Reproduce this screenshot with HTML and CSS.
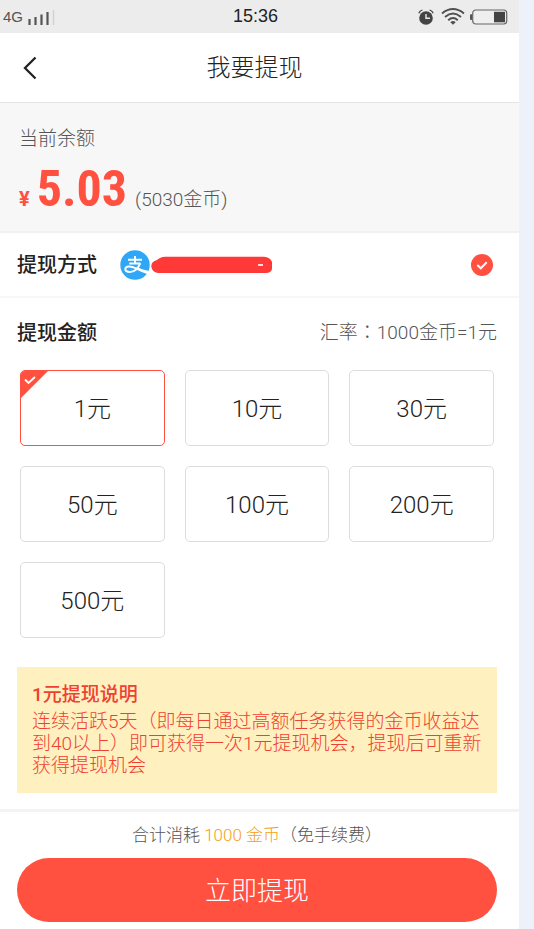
FILE: index.html
```html
<!DOCTYPE html>
<html lang="zh-CN">
<head>
<meta charset="utf-8">
<meta name="viewport" content="width=device-width, initial-scale=1">
<title>我要提现</title>
<link rel="stylesheet" href="styles.css">
</head>
<body>
<div class="screen">
  <div class="status">
    <div class="status-side">
      <span class="network">4G</span>
      <svg class="signal" width="27" height="16" viewBox="0 0 27 16" aria-hidden="true">
        <path d="M1.500 10v6M7.500 8V16M13.500 5.500v10.500M19.500 3V16" stroke="#555" stroke-width="2.200"/>
        <path d="M25.500 1v15" stroke="#d2d2d2" stroke-width="1.500"/>
      </svg>
    </div>
    <time class="clock">15:36</time>
    <div class="status-side status-right">
      <svg width="16" height="16" viewBox="0 0 16 16" aria-hidden="true">
        <circle cx="8" cy="9" r="6.800" fill="#444"/>
        <path d="M.8 4.200Q1.800 1.800 4.400 1M15.200 4.200Q14.200 1.800 11.600 1" fill="none" stroke="#444" stroke-width="1.300"/>
        <path d="M8 5v4.300h4" fill="none" stroke="#ececec" stroke-width="1.400"/>
      </svg>
      <svg width="24" height="17" viewBox="0 0 24 17" aria-hidden="true">
        <g fill="none" stroke="#505050" stroke-width="1.900">
          <path d="M1 5.500Q12-3.300 23 5.500"/>
          <path d="M4 9Q12 2.200 20 9"/>
          <path d="M7.200 12.200Q12 7.800 16.800 12.200"/>
        </g>
        <path d="M9.300 14.200Q12 12 14.700 14.200L12 16.800z" fill="#505050"/>
      </svg>
      <svg width="39" height="16" viewBox="0 0 39 16" aria-hidden="true">
        <path d="M3 5.200H2Q1 5.200 1 6.200V10q0 1 1 1h1z" fill="#555"/>
        <rect x="3.700" y="1" width="34" height="14" rx="3" fill="#efefef" stroke="#666" stroke-width="1.200"/>
        <rect x="25" y="2.800" width="11" height="10.500" fill="#444"/>
      </svg>
    </div>
  </div>

  <header class="topbar">
    <button class="back" type="button" aria-label="返回">
      <svg width="14" height="24" viewBox="0 0 14 24" aria-hidden="true"><path d="M12.500 1.500L2 12l10.500 10.500" fill="none" stroke="#222" stroke-width="2.300"/></svg>
    </button>
    <h1 class="title">我要提现</h1>
  </header>

  <main>
    <section class="balance">
      <h2 class="balance-label">当前余额</h2>
      <p class="balance-row"><span class="yen">¥</span><span class="sum">5.03</span><span class="coins">(5030金币)</span></p>
    </section>

    <section class="method">
      <h2 class="heading">提现方式</h2>
      <label class="account">
        <svg class="alipay" width="30" height="30" viewBox="0 0 30 30" role="img" aria-label="支付宝">
          <circle cx="15" cy="15" r="14.700" fill="#2ea7f8"/>
          <path d="M8 9.700h14M15 6v7.500M9.300 13.500h11" fill="none" stroke="#fff" stroke-width="1.900"/>
          <path d="M20.300 13.200C18.500 18 14.500 22 9.800 22c-3 0-4.600-1.300-4.500-3 .1-1.600 1.700-2.700 4-2.600 4.500.2 9.500 3.200 18.600 6.100" fill="none" stroke="#fff" stroke-width="2"/>
          <path d="M17.500 17.500q5 2.200 11.300 3.400l-1.600 3.200q-5.500-2-11-4.700z" fill="#fff"/>
        </svg>
        <svg class="masked" width="122" height="18" viewBox="0 0 122 18" role="img" aria-label="账号已隐藏">
          <path d="M6 4Q9 1 14 .8H113Q119 1 121 6V13Q120 17 115 17H7Q1 16 .3 10.500 0 5.500 6 4z" fill="#ff3838"/>
          <path d="M107 9h5" stroke="#fff" stroke-width="1.600"/>
        </svg>
        <input class="hidden-radio" type="radio" name="method" checked aria-label="支付宝">
        <svg class="tick" width="22" height="22" viewBox="0 0 22 22" aria-hidden="true">
          <circle cx="11" cy="11" r="11" fill="#ff5040"/>
          <path d="M6.300 11l3.500 3.300 5.900-6" fill="none" stroke="#fff" stroke-width="2"/>
        </svg>
      </label>
    </section>

    <section class="amounts">
      <div class="amounts-head">
        <h2 class="heading">提现金额</h2>
        <p class="rate">汇率<span class="colon" lang="zh-TW">：</span>1000金币=1元</p>
      </div>
      <div class="grid" role="radiogroup" aria-label="提现金额">
        <label class="option"><input class="hidden-radio" type="radio" name="amount" checked>
          <svg class="corner" width="27" height="27" viewBox="0 0 27 27" aria-hidden="true"><path d="M0 0h27L0 27z" fill="#ff5040"/><path d="M4 8.500l3.500 3.500L14 6" fill="none" stroke="#fff" stroke-width="1.800"/></svg>1元</label>
        <label class="option"><input class="hidden-radio" type="radio" name="amount">10元</label>
        <label class="option"><input class="hidden-radio" type="radio" name="amount">30元</label>
        <label class="option"><input class="hidden-radio" type="radio" name="amount">50元</label>
        <label class="option"><input class="hidden-radio" type="radio" name="amount">100元</label>
        <label class="option"><input class="hidden-radio" type="radio" name="amount">200元</label>
        <label class="option"><input class="hidden-radio" type="radio" name="amount">500元</label>
      </div>
      <div class="notice">
        <h3 class="notice-title">1元提现说明</h3>
        <p class="notice-text">连续活跃5天（即每日通过高额任务获得的金币收益达到40以上）即可获得一次1元提现机会，提现后可重新获得提现机会</p>
      </div>
    </section>
  </main>

  <footer class="footer">
    <p class="total">合计消耗 <span class="cost">1000 金币</span>（免手续费）</p>
    <button class="submit" type="button">立即提现</button>
  </footer>
</div>
</body>
</html>
```
FILE: styles.css
```css
* {
  box-sizing: border-box;
  margin: 0;
}

body {
  padding-right: 15px;
  background: #edf1fa;
  color: #222;
  font-family: Roboto, "Noto Sans CJK SC", sans-serif;
  font-weight: 300;
}

.screen {
  display: flex;
  flex-direction: column;
  min-height: 100vh;
  background: #fff;
}

.status {
  display: flex;
  align-items: center;
  height: 33px;
  padding: 0 11px 0 3px;
  background: #ececec;
  font-family: "Liberation Sans", sans-serif;
  font-weight: 400;
}

.status-side {
  display: flex;
  flex: 1;
  align-items: center;
  gap: 5px;
}

.status-right {
  justify-content: flex-end;
  gap: 7px;
}

.status-right svg:last-child {
  margin-left: -3px;
}

.network {
  color: #555;
  font-size: 15px;
}

.clock {
  color: #222;
  font-size: 18px;
}

.topbar {
  display: grid;
  grid-template-columns: 60px 1fr 70px;
  align-items: center;
  height: 70px;
  border-bottom: 1px solid #e4e4e4;
}

.back {
  display: flex;
  justify-content: center;
  padding: 8px 0;
  border: 0;
  background: none;
}

.title {
  font-size: 24px;
  font-weight: 300;
  line-height: 36px;
  text-align: center;
}

.balance {
  padding: 22px 19px 8px;
  border-bottom: 2px solid #f1f1f1;
  background: #f7f7f7;
  color: #555;
}

.balance-label {
  font-size: 19px;
  font-weight: 300;
  line-height: 28px;
}

.balance-row {
  display: flex;
  align-items: baseline;
  height: 70px;
  line-height: 72px;
}

.yen,
.sum {
  color: #ff5040;
  font-weight: 700;
}

.yen {
  margin-right: 7px;
  font-size: 20px;
}

.sum {
  font-family: "Roboto Condensed", "Liberation Sans Narrow", sans-serif;
  font-size: 50px;
}

.coins {
  margin-left: 8px;
  font-size: 19px;
}

.method {
  display: flex;
  align-items: center;
  height: 65px;
  padding: 0 26px 0 17px;
  border-bottom: 2px solid #f7f7f7;
}

.heading {
  font-size: 20px;
  font-weight: 500;
  line-height: 30px;
}

.account {
  position: relative;
  display: flex;
  flex: 1;
  align-items: center;
  margin-left: 23px;
}

.masked {
  margin-left: 1px;
}

.tick {
  margin-left: auto;
}

.hidden-radio {
  position: absolute;
  width: 1px;
  height: 1px;
  opacity: 0;
}

.amounts {
  padding: 20px 22px 15px 17px;
}

.amounts-head {
  display: flex;
  align-items: center;
  justify-content: space-between;
}

.rate {
  color: #555;
  font-size: 19px;
  line-height: 30px;
}

.colon {
  font-family: "Noto Sans CJK TC", sans-serif;
  line-height: 1;
}

.grid {
  display: grid;
  grid-template-columns: repeat(3, 1fr);
  gap: 20px;
  padding: 22px 3px 0;
}

.option {
  position: relative;
  display: flex;
  align-items: center;
  justify-content: center;
  height: 76px;
  padding-bottom: 4px;
  border: 1px solid #ddd;
  border-radius: 5px;
  overflow: hidden;
  font-size: 24px;
}

.option:has(:checked) {
  border-color: #ff5040;
}

.corner {
  position: absolute;
  top: 0;
  left: 0;
}

.notice {
  margin-top: 29px;
  padding: 16px 15px;
  background: #fef0bf;
  color: #f04030;
  font-size: 19px;
}

.notice-title {
  margin-bottom: 4px;
  font-size: 19px;
  font-weight: 500;
  line-height: 24px;
}

.notice-text {
  line-height: 22px;
}

.footer {
  margin-top: auto;
  padding: 11px 22px 7px 17px;
  border-top: 3px solid #f3f3f3;
}

.total {
  color: #555;
  font-size: 17px;
  line-height: 24px;
  text-align: center;
}

.cost {
  color: #f5a010;
}

.submit {
  display: block;
  width: 100%;
  height: 64px;
  margin-top: 11px;
  padding-bottom: 4px;
  border: 0;
  border-radius: 32px;
  background: #ff5040;
  color: #fff;
  font-family: inherit;
  font-size: 26px;
  font-weight: 300;
}
```
